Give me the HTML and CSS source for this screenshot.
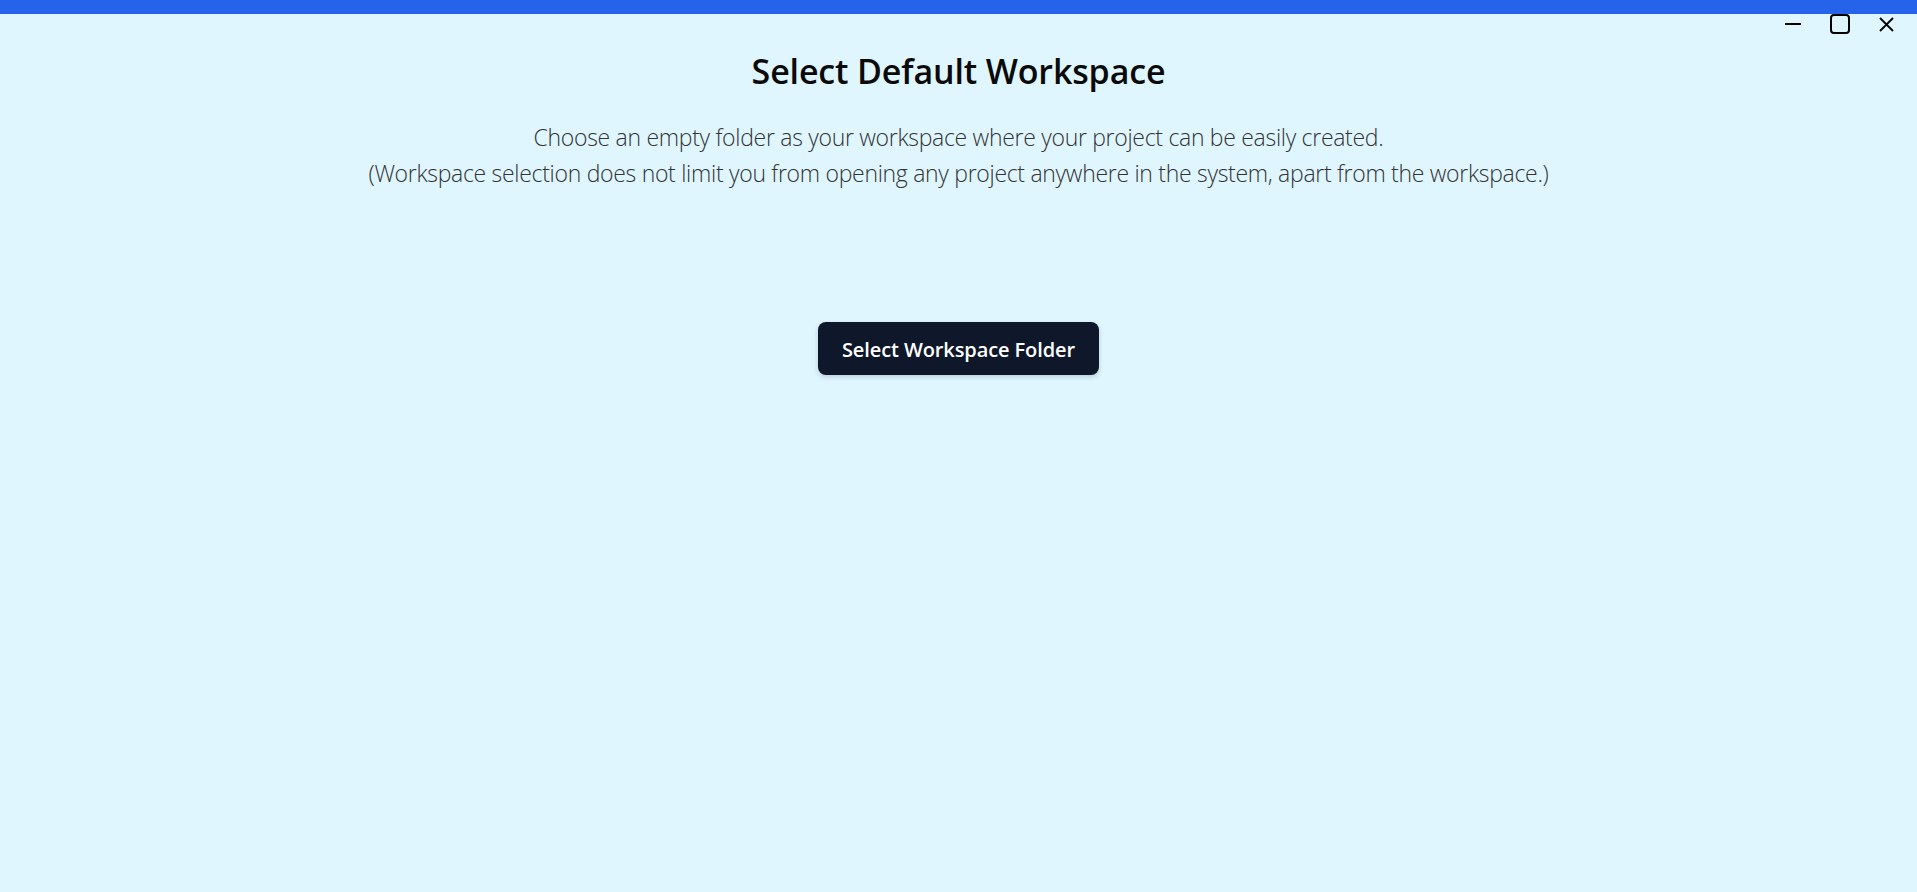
FILE: index.html
```html
<!DOCTYPE html>
<html lang="en">
<head>
<meta charset="utf-8">
<title>Select Default Workspace</title>
<link rel="stylesheet" href="styles.css">
</head>
<body>
<div class="app">
  <div class="topbar"></div>
  <div class="window-controls">
    <button class="win-btn" aria-label="Minimize">
      <svg width="16" height="2" viewBox="0 0 16 2"><rect x="0" y="0" width="16" height="2" fill="#000"/></svg>
    </button>
    <button class="win-btn" aria-label="Maximize">
      <svg width="20" height="20" viewBox="0 0 20 20"><rect x="1" y="1" width="18" height="18" rx="3" ry="3" fill="none" stroke="#000" stroke-width="2"/></svg>
    </button>
    <button class="win-btn" aria-label="Close">
      <svg width="15" height="15" viewBox="0 0 15 15"><path d="M1 1 L14 14 M14 1 L1 14" stroke="#000" stroke-width="1.8" fill="none"/></svg>
    </button>
  </div>
  <main class="content">
    <h1 class="title">Select Default Workspace</h1>
    <p class="subtitle">Choose an empty folder as your workspace where your project can be easily created.<br>(Workspace selection does not limit you from opening any project anywhere in the system, apart from the workspace.)</p>
    <button class="primary-btn">Select Workspace Folder</button>
  </main>
</div>
</body>
</html>
```
FILE: styles.css
```css
html, body {
  margin: 0;
  padding: 0;
  height: 100%;
}
body {
  background: #dff6ff;
  font-family: "Open Sans", "Noto Sans", sans-serif;
  overflow: hidden;
}
.app {
  display: flex;
  flex-direction: column;
  min-height: 100%;
}
.topbar {
  height: 14px;
  background: #2563eb;
}
.window-controls {
  display: flex;
  justify-content: flex-end;
  align-items: center;
  height: 20px;
  padding-right: 7px;
}
.win-btn {
  width: 47px;
  height: 20px;
  padding: 0;
  border: none;
  background: transparent;
  display: flex;
  align-items: center;
  justify-content: center;
}
.win-btn svg {
  display: block;
}
.content {
  display: flex;
  flex-direction: column;
  align-items: center;
  text-align: center;
}
.title {
  margin: 17px 0 0;
  font-size: 34px;
  font-weight: 600;
  letter-spacing: -0.15px;
  line-height: 40px;
  color: #0a0a0a;
}
.subtitle {
  margin: 28px 0 0;
  font-size: 23px;
  font-weight: 300;
  letter-spacing: -0.3px;
  line-height: 36px;
  color: #333333;
}
.primary-btn {
  margin-top: 131px;
  padding: 13px 24px 11px;
  border: none;
  border-radius: 8px;
  background: #0f172a;
  color: #ffffff;
  font-family: "Open Sans", "Noto Sans", sans-serif;
  font-size: 20px;
  font-weight: 600;
  letter-spacing: -0.1px;
  line-height: 29px;
  box-shadow: 0 2px 5px rgba(15, 23, 42, 0.18);
  cursor: pointer;
}
```
